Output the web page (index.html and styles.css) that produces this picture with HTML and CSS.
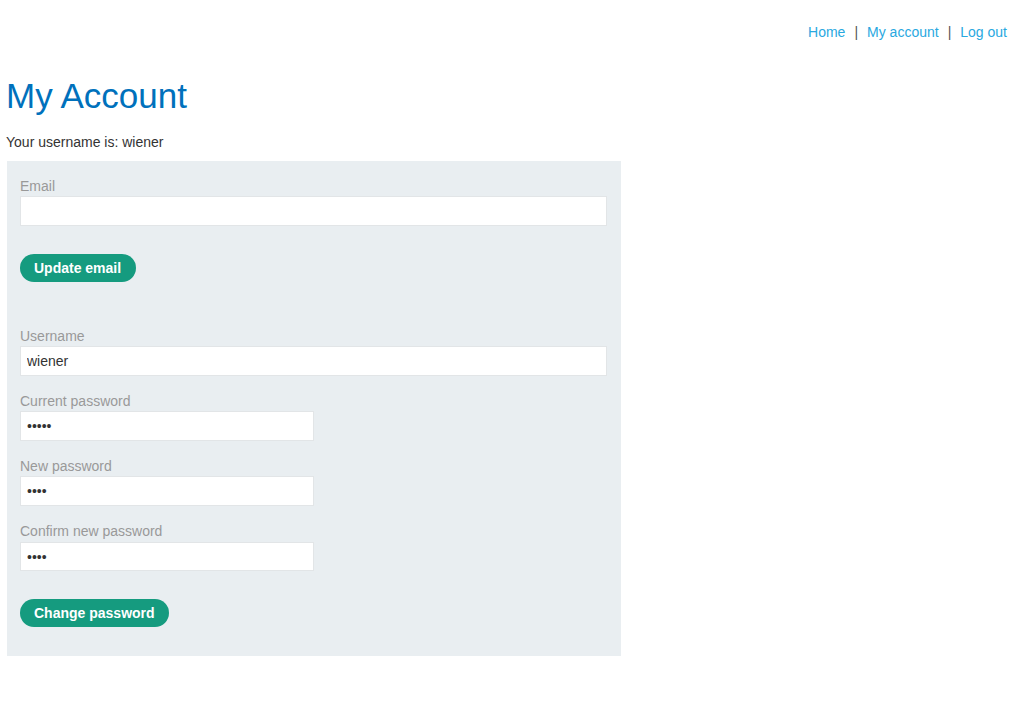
FILE: index.html
```html
<!DOCTYPE html>
<html lang="en">
<head>
<meta charset="utf-8">
<title>My Account</title>
<link rel="stylesheet" href="styles.css">
</head>
<body>
<div class="page">
  <header class="top-links">
    <a href="#">Home</a><span class="sep">|</span><a href="#">My account</a><span class="sep">|</span><a href="#">Log out</a>
  </header>
  <h1 class="title">My Account</h1>
  <p class="username-line">Your username is: wiener</p>
  <div class="panel">
    <form class="form form-email">
      <label class="label">Email</label>
      <input class="field field-full" type="email" value="">
      <button class="btn" type="button">Update email</button>
    </form>
    <form class="form form-password">
      <label class="label">Username</label>
      <input class="field field-full" type="text" value="wiener">
      <label class="label">Current password</label>
      <input class="field field-half" type="password" value="peter">
      <label class="label">New password</label>
      <input class="field field-half" type="password" value="abcd">
      <label class="label">Confirm new password</label>
      <input class="field field-half confirm" type="password" value="abcd">
      <button class="btn" type="button">Change password</button>
    </form>
  </div>
</div>
</body>
</html>
```
FILE: styles.css
```css
* { box-sizing: border-box; }
html, body { margin: 0; padding: 0; background: #fff; }
body {
  font-family: "Liberation Sans", Arial, sans-serif;
  font-size: 14px;
  line-height: 16px;
  color: #333;
}
.page { padding: 0 7px; }
.top-links {
  display: flex;
  justify-content: flex-end;
  padding-top: 24px;
  padding-right: 10px;
  height: 40px;
}
.top-links a { color: #29a8df; text-decoration: none; }
.top-links .sep { color: #555; margin: 0 9px; }
.title {
  margin: 36px 0 0 -1px;
  font-size: 35px;
  line-height: 40px;
  font-weight: normal;
  color: #0071bc;
}
.username-line { margin: 18px 0 0 -1px; }
.panel {
  margin-top: 11px;
  width: 614px;
  background: #e9eef1;
  padding: 17px 14px 29px 13px;
}
.form { display: flex; flex-direction: column; align-items: flex-start; }
.form-password { margin-top: 45px; }
.label { color: #999; display: block; margin-bottom: 2px; }
.form-password .label { padding-top: 1px; margin-bottom: 2px; }
.field {
  height: 30px;
  border: 1px solid #e2e5e7;
  background: #fff;
  font-family: "Liberation Sans", Arial, sans-serif;
  font-size: 14px;
  color: #333;
  padding: 0 6px;
  margin: 0 0 16px 0;
  outline: none;
}
.field-full { width: 100%; }
.field-half { width: 50%; }
.form-email .field { margin-bottom: 28px; }
.form-password .field.confirm { margin-top: 1px; margin-bottom: 28px; height: 29px; }
.btn {
  height: 28px;
  border: none;
  border-radius: 14px;
  background: #159b7f;
  color: #fff;
  font-family: "Liberation Sans", Arial, sans-serif;
  font-weight: bold;
  font-size: 14px;
  padding: 0 14px;
  cursor: pointer;
}
.form-email .btn { padding-right: 15px; }
```
